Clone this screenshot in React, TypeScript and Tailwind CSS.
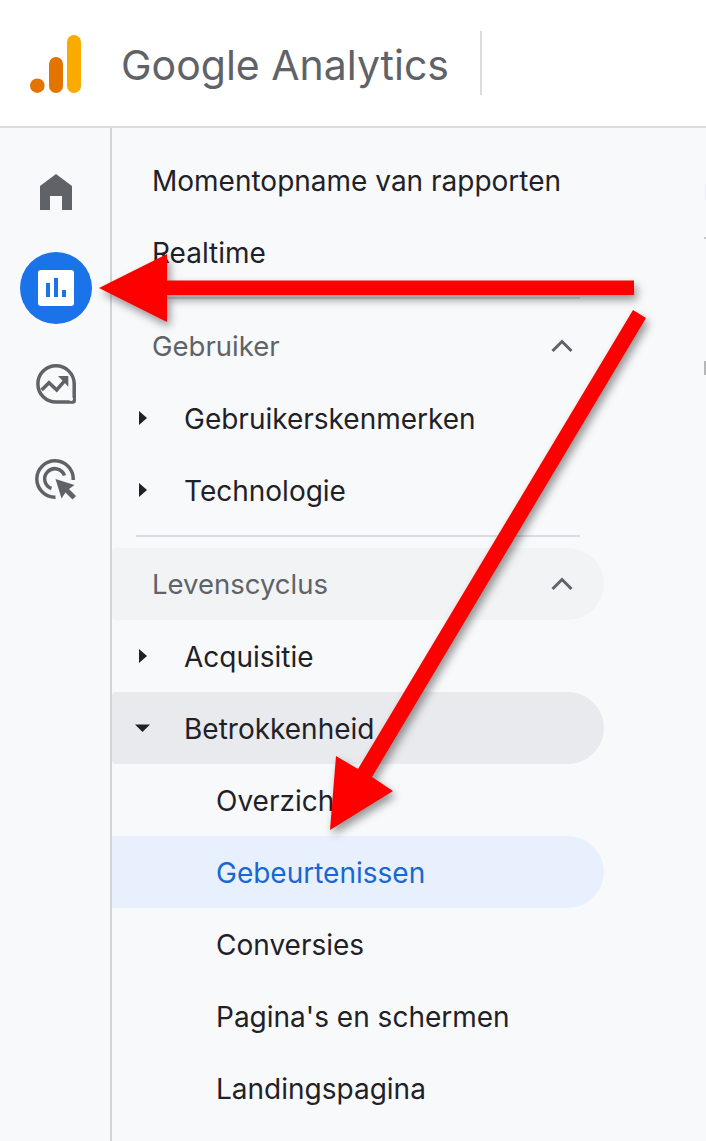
const font = { fontFamily: '"Inter", "Roboto", "Liberation Sans", sans-serif' }

function Caret({ open }: { open?: boolean }) {
  return (
    <svg width="16" height="16" viewBox="0 0 16 16" className="absolute left-[23px] top-[28px]" fill="#1f2127">
      {open ? <path d="M0 4.500H15L7.500 12Z" /> : <path d="M4 1V15L12 8Z" />}
    </svg>
  )
}

function Chevron() {
  return (
    <svg width="24" height="16" viewBox="0 0 24 16" fill="none" stroke="#5f6368" strokeWidth="3" className="absolute right-[30px] top-[28px]">
      <path d="M2.500 13 12 3.500 21.500 13" />
    </svg>
  )
}

function Row({ label, indent, caret, open, className }: { label: string; indent: string; caret?: boolean; open?: boolean; className?: string }) {
  return (
    <div className={`relative h-[72px] flex items-center pt-[2px] text-[28px] text-[#1f2127] ${indent} ${className ?? ''}`}>
      {caret && <Caret open={open} />}
      {label}
    </div>
  )
}

function Section({ label, pill }: { label: string; pill?: boolean }) {
  return (
    <div className={`relative h-[72px] flex items-center pl-[40px] pt-[2px] text-[27.500px] text-[#5f6368] rounded-r-[36px] rounded-l-[4px] ${pill ? 'bg-[#f1f3f4]' : ''}`}>
      {label}
      <Chevron />
    </div>
  )
}

function Arrows() {
  return (
    <svg width="706" height="1141" viewBox="0 0 706 1141" className="absolute inset-0 pointer-events-none" style={{ filter: 'drop-shadow(3px 5px 4px rgba(0,0,0,.4))' }}>
      <path fill="#ff0000" d="M99 288 167 254V280.500H634V295H167V322Z" />
      <path fill="#ff0000" d="M633 310 646 318 372 777 393 791 330 830 336 756 358 769Z" />
    </svg>
  )
}

export default function App() {
  return (
    <div style={font} className="relative w-[706px] h-[1141px] overflow-hidden bg-white">
      <header className="h-[128px] flex items-center border-b-2 border-[#dadce0] bg-white">
        <svg width="52" height="58" viewBox="0 0 52 58" className="ml-[30px] mt-[2px] shrink-0">
          <circle cx="7.300" cy="50.700" r="7.300" fill="#e37400" />
          <rect x="19" y="22" width="14" height="36" rx="7" fill="#e37400" />
          <rect x="37" y="0" width="14" height="58" rx="7" fill="#f9ab00" />
        </svg>
        <span className="ml-[39px] w-[326px] shrink-0 whitespace-nowrap pt-[5px] text-[41px] text-[#5f6368]">Google Analytics</span>
        <div className="ml-[33px] w-[2px] h-[64px] bg-[#dadce0]" />
      </header>

      <div className="flex h-[1013px] bg-[#f8f9fb]">
        <nav className="w-[112px] shrink-0 border-r-2 border-[#d3d4d6] flex flex-col items-center pl-[2px]">
          <div className="w-[72px] h-[72px] mt-[28px] flex items-center justify-center">
            <svg width="32" height="36" viewBox="0 0 32 36" fill="#5f6368">
              <path d="M16 0 32 12V36H22V22H10V36H0V12Z" />
            </svg>
          </div>
          <div className="w-[72px] h-[72px] mt-[24px] rounded-full bg-[#1a73e8] flex items-center justify-center">
            <div className="w-[36px] h-[36px] rounded-[3px] bg-white flex items-end justify-center gap-[4px] pb-[9px]">
              <div className="w-[4px] h-[14px] bg-[#1a73e8]" />
              <div className="w-[4px] h-[19px] bg-[#1a73e8]" />
              <div className="w-[4px] h-[7px] bg-[#1a73e8]" />
            </div>
          </div>
          <div className="w-[72px] h-[72px] mt-[24px] flex items-center justify-center">
            <svg width="40" height="40" viewBox="0 0 40 40" fill="none">
              <path d="M20 1.800A18.200 18.200 0 0 1 38.200 20V36.500a1.500 1.500 0 0 1-1.500 1.500H20a18.100 18.100 0 0 1 0-36.200Z" stroke="#5f6368" strokeWidth="3.500" />
              <path d="M5.700 26 13 18.700 20.700 26 30.700 14.300" stroke="#5f6368" strokeWidth="3.500" />
              <path d="M22 12H32.300V22.700Z" fill="#5f6368" />
              <circle cx="35" cy="35" r="2" fill="#f8f9fb" />
            </svg>
          </div>
          <div className="w-[72px] h-[72px] mt-[24px] flex items-center justify-center">
            <svg width="42" height="42" viewBox="0 0 42 42" fill="none">
              <path d="M38.200 21A18.200 18.200 0 1 0 20.500 38.200" stroke="#5f6368" strokeWidth="3.500" />
              <path d="M29.500 16.500A10.200 10.200 0 1 0 16.500 29.500" stroke="#5f6368" strokeWidth="3.500" />
              <path d="M20.500 20 39.500 26 34 30 41 37 37.500 40.500 30.500 33.500 26.500 39.500Z" fill="#5f6368" />
            </svg>
          </div>
        </nav>

        <div className="w-[492px] shrink-0 pt-[16px]">
          <Row label="Momentopname van rapporten" indent="pl-[40px]" />
          <Row label="Realtime" indent="pl-[40px]" />
          <div className="ml-[24px] mr-[24px] mt-[9px] h-[2px] bg-[#dadce0]" />
          <div className="mt-[11px]"><Section label="Gebruiker" /></div>
          <Row label="Gebruikerskenmerken" indent="pl-[72px]" caret />
          <Row label="Technologie" indent="pl-[72px]" caret />
          <div className="ml-[24px] mr-[24px] mt-[9px] h-[2px] bg-[#dadce0]" />
          <div className="mt-[11px]"><Section label="Levenscyclus" pill /></div>
          <Row label="Acquisitie" indent="pl-[72px]" caret />
          <Row label="Betrokkenheid" indent="pl-[72px]" caret open className="bg-[#e8eaed] rounded-r-[36px] rounded-l-[4px]" />
          <Row label="Overzicht" indent="pl-[104px]" />
          <Row label="Gebeurtenissen" indent="pl-[104px]" className="bg-[#e8f0fe] rounded-r-[36px] !text-[#1967d2]" />
          <Row label="Conversies" indent="pl-[104px]" />
          <Row label="Pagina's en schermen" indent="pl-[104px]" />
          <Row label="Landingspagina" indent="pl-[104px]" />
        </div>
      </div>

      {/* bits of the page behind the menu, cut off at the right edge */}
      <div className="absolute left-[705px] top-[184px] w-[1px] h-[16px] bg-[#e8f0fe]" />
      <div className="absolute left-[704px] top-[237px] w-[2px] h-[2px] bg-[#c4c7cc]" />
      <div className="absolute left-[704px] top-[361px] w-[2px] h-[14px] bg-[#b4b6ba]" />
      <Arrows />
    </div>
  )
}
